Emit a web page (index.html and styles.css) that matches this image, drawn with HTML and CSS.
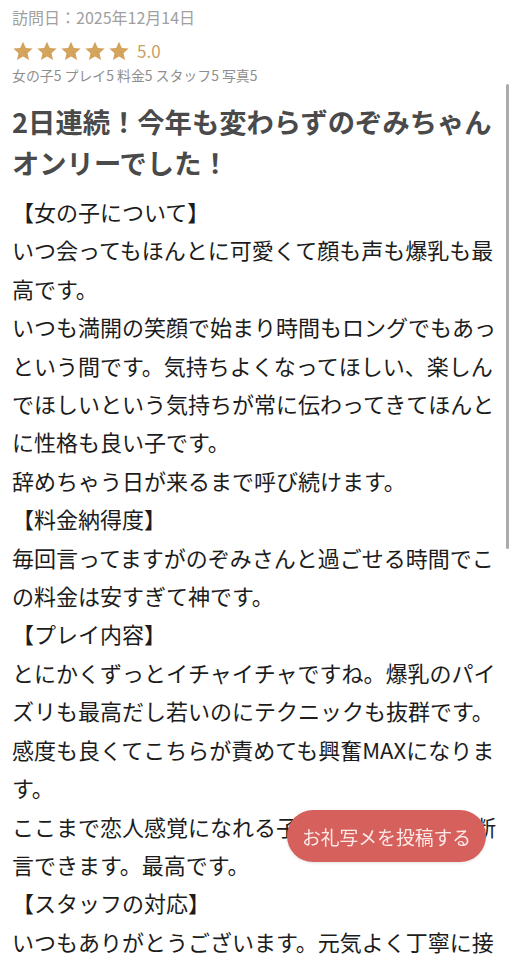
FILE: index.html
```html
<!DOCTYPE html>
<html lang="ja">
<head>
<meta charset="utf-8">
<link rel="stylesheet" href="styles.css">
</head>
<body>
<main class="review">
  <div class="visit">訪問日：2025年12月14日</div>
  <div class="rating">
    <span class="stars">
      <svg viewBox="0 0 24 24" class="star"><path d="M12 1.8l3.1 6.9 7.4.7-5.6 5 1.7 7.3L12 17.9l-6.6 3.8 1.7-7.3-5.6-5 7.4-.7z"/></svg>
      <svg viewBox="0 0 24 24" class="star"><path d="M12 1.8l3.1 6.9 7.4.7-5.6 5 1.7 7.3L12 17.9l-6.6 3.8 1.7-7.3-5.6-5 7.4-.7z"/></svg>
      <svg viewBox="0 0 24 24" class="star"><path d="M12 1.8l3.1 6.9 7.4.7-5.6 5 1.7 7.3L12 17.9l-6.6 3.8 1.7-7.3-5.6-5 7.4-.7z"/></svg>
      <svg viewBox="0 0 24 24" class="star"><path d="M12 1.8l3.1 6.9 7.4.7-5.6 5 1.7 7.3L12 17.9l-6.6 3.8 1.7-7.3-5.6-5 7.4-.7z"/></svg>
      <svg viewBox="0 0 24 24" class="star"><path d="M12 1.8l3.1 6.9 7.4.7-5.6 5 1.7 7.3L12 17.9l-6.6 3.8 1.7-7.3-5.6-5 7.4-.7z"/></svg>
    </span>
    <span class="score">5.0</span>
  </div>
  <div class="subscores">女の子5 プレイ5 料金5 スタッフ5 写真5</div>
  <h1 class="title">2日連続！今年も変わらずのぞみちゃんオンリーでした！</h1>
  <div class="body">
    <p>【女の子について】</p>
    <p>いつ会ってもほんとに可愛くて顔も声も爆乳も最高です。</p>
    <p>いつも満開の笑顔で始まり時間もロングでもあっという間です。気持ちよくなってほしい、楽しんでほしいという気持ちが常に伝わってきてほんとに性格も良い子です。</p>
    <p>辞めちゃう日が来るまで呼び続けます。</p>
    <p>【料金納得度】</p>
    <p>毎回言ってますがのぞみさんと過ごせる時間でこの料金は安すぎて神です。</p>
    <p>【プレイ内容】</p>
    <p>とにかくずっとイチャイチャですね。爆乳のパイズリも最高だし若いのにテクニックも抜群です。</p>
    <p>感度も良くてこちらが責めても興奮MAXになります。</p>
    <p>ここまで恋人感覚になれる子は他にはいないと断言できます。最高です。</p>
    <p>【スタッフの対応】</p>
    <p>いつもありがとうございます。元気よく丁寧に接客していただけて気持ちよく利用できます。</p>
  </div>
</main>
<button class="post-btn">お礼写メを投稿する</button>
<div class="scrollbar"></div>
</body>
</html>
```

FILE: styles.css
```css
html, body {
  margin: 0;
  padding: 0;
  background: #ffffff;
  height: 960px;
  overflow: hidden;
}

body {
  font-family: "Noto Sans CJK JP", "Noto Sans", sans-serif;
  color: #1c1c1c;
}

.review {
  padding: 5px 12px 0 12px;
  width: 490px;
}

.visit {
  font-size: 16px;
  line-height: 24px;
  color: #a0a0a0;
}

.rating {
  display: flex;
  align-items: center;
  gap: 7px;
  margin-top: 11px;
  height: 22px;
}

.stars {
  display: flex;
  gap: 2px;
}

.star {
  width: 22px;
  height: 22px;
  fill: #d4a35c;
}

.score {
  font-size: 17px;
  color: #c9a063;
  line-height: 22px;
}

.subscores {
  font-size: 13.9px;
  line-height: 20px;
  color: #8e8e8e;
  margin-top: 3px;
}

.title {
  margin: 16px 0 0 0;
  font-size: 27.3px;
  line-height: 41px;
  font-weight: 700;
  color: #4a4a4a;
}

.body {
  margin-top: 9px;
  font-size: 22px;
  line-height: 38.4px;
}

.body p {
  margin: 0;
}

.post-btn {
  position: fixed;
  right: 28px;
  bottom: 98px;
  width: 199px;
  height: 52px;
  border: none;
  border-radius: 26px;
  background: #d6605b;
  color: #fbe9e7;
  font-family: "Noto Sans CJK JP", sans-serif;
  font-size: 18.8px;
  padding: 0;
  box-shadow: 0 1px 3px rgba(0,0,0,0.12);
}

.scrollbar {
  position: fixed;
  right: 5px;
  top: 84px;
  width: 3px;
  height: 465px;
  border-radius: 2px;
  background: #ababab;
}
```
